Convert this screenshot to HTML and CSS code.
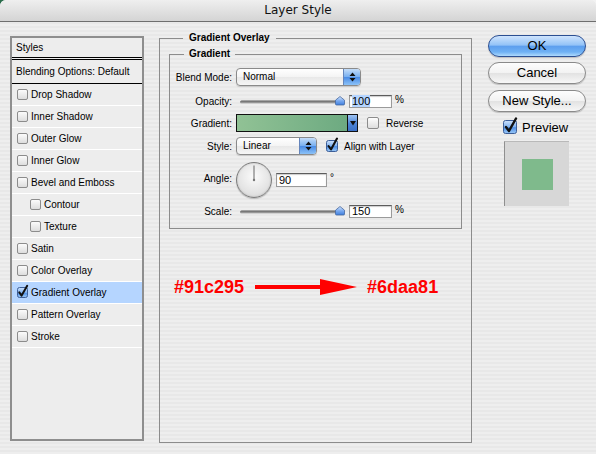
FILE: index.html
```html
<!DOCTYPE html>
<html>
<head>
<meta charset="utf-8">
<title>Layer Style</title>
<link rel="stylesheet" href="styles.css">
</head>
<body>
<svg class="defs" width="0" height="0">
  <defs>
    <linearGradient id="blueBox" x1="0" y1="0" x2="0" y2="1">
      <stop offset="0" stop-color="#cfe2fb"/>
      <stop offset="0.5" stop-color="#7fb2f1"/>
      <stop offset="0.55" stop-color="#4f8fe6"/>
      <stop offset="1" stop-color="#9ccaf8"/>
    </linearGradient>
    <linearGradient id="thumbG" x1="0" y1="0" x2="0" y2="1">
      <stop offset="0" stop-color="#d8e8fc"/>
      <stop offset="0.5" stop-color="#7aaaf0"/>
      <stop offset="1" stop-color="#3e7edd"/>
    </linearGradient>
    <linearGradient id="trackG" x1="0" y1="0" x2="0" y2="1">
      <stop offset="0" stop-color="#5a5a5a"/>
      <stop offset="1" stop-color="#b4b4b4"/>
    </linearGradient>
  </defs>
</svg>
<div class="window">
  <div class="titlebar">Layer Style</div>
  <div class="content">
    <div class="styles-panel">
      <div class="row head">Styles</div>
      <div class="row blend">Blending Options: Default</div>
      <div class="row item"><span class="cb"></span>Drop Shadow</div>
      <div class="row item"><span class="cb"></span>Inner Shadow</div>
      <div class="row item"><span class="cb"></span>Outer Glow</div>
      <div class="row item"><span class="cb"></span>Inner Glow</div>
      <div class="row item"><span class="cb"></span>Bevel and Emboss</div>
      <div class="row item sub"><span class="cb"></span>Contour</div>
      <div class="row item sub"><span class="cb"></span>Texture</div>
      <div class="row item"><span class="cb"></span>Satin</div>
      <div class="row item"><span class="cb"></span>Color Overlay</div>
      <div class="row item selected"><svg class="cbs" width="11" height="11" viewBox="0 0 11 11"><rect x="0.5" y="0.5" width="10" height="10" rx="2" fill="url(#blueBox)" stroke="#3d5f99"/><path d="M2.3 5.4 L4.6 8.6 L10.2 -1.2" fill="none" stroke="#111" stroke-width="2" stroke-linecap="round" stroke-linejoin="round"/></svg>Gradient Overlay</div>
      <div class="row item"><span class="cb"></span>Pattern Overlay</div>
      <div class="row item"><span class="cb"></span>Stroke</div>
    </div>

    <fieldset class="group outer">
      <legend>Gradient Overlay</legend>
      <fieldset class="group inner">
        <legend>Gradient</legend>
        <div class="frow r1">
          <span class="lbl">Blend Mode:</span>
          <div class="popup pop-blend"><span class="ptext">Normal</span><span class="parrow"><svg width="7" height="10" viewBox="0 0 7 10"><path d="M0.5 4 L3.5 0.5 L6.5 4 Z M0.5 6 L3.5 9.5 L6.5 6 Z" fill="#111"/></svg></span></div>
        </div>
        <div class="frow r2">
          <span class="lbl">Opacity:</span>
          <svg class="slider" width="109" height="18" viewBox="0 0 109 18"><rect x="4" y="8.5" width="103" height="3" rx="1.5" fill="url(#trackG)"/><path d="M104 4.5 L108.5 8.2 L108.5 12 Q108.5 13 107.5 13 L100.5 13 Q99.5 13 99.5 12 L99.5 8.2 Z" fill="url(#thumbG)" stroke="#45679f" stroke-width="0.8"/></svg>
          <span class="field"><span class="sel">100</span></span>
          <span class="unit">%</span>
        </div>
        <div class="frow r3">
          <span class="lbl">Gradient:</span>
          <span class="grad"></span><span class="garrow"><svg width="6" height="5" viewBox="0 0 6 5"><path d="M0 0 L6 0 L3 4.5 Z" fill="#111"/></svg></span>
          <span class="cbm rev"></span><span class="cbtext rev-t">Reverse</span>
        </div>
        <div class="frow r4">
          <span class="lbl">Style:</span>
          <div class="popup pop-style"><span class="ptext">Linear</span><span class="parrow"><svg width="7" height="10" viewBox="0 0 7 10"><path d="M0.5 4 L3.5 0.5 L6.5 4 Z M0.5 6 L3.5 9.5 L6.5 6 Z" fill="#111"/></svg></span></div>
          <svg class="cbm-s" width="12" height="12" viewBox="0 0 12 12"><rect x="0.5" y="0.5" width="11" height="11" rx="2" fill="url(#blueBox)" stroke="#3d5f99"/><path d="M2.5 6 L5 9.4 L11 -1.4" fill="none" stroke="#111" stroke-width="2.1" stroke-linecap="round" stroke-linejoin="round"/></svg>
          <span class="cbtext">Align with Layer</span>
        </div>
        <div class="frow r5">
          <span class="lbl lbl-angle">Angle:</span>
          <span class="dial"><svg width="34" height="34" viewBox="0 0 34 34"><line x1="17" y1="2.5" x2="17" y2="17" stroke="#666" stroke-width="1"/><circle cx="17" cy="17" r="1.2" fill="#777"/></svg></span>
          <span class="field angle">90</span>
          <span class="deg">°</span>
        </div>
        <div class="frow r6">
          <span class="lbl">Scale:</span>
          <svg class="slider" width="109" height="18" viewBox="0 0 109 18"><rect x="4" y="8.5" width="103" height="3" rx="1.5" fill="url(#trackG)"/><path d="M104 4.5 L108.5 8.2 L108.5 12 Q108.5 13 107.5 13 L100.5 13 Q99.5 13 99.5 12 L99.5 8.2 Z" fill="url(#thumbG)" stroke="#45679f" stroke-width="0.8"/></svg>
          <span class="field">150</span>
          <span class="unit">%</span>
        </div>
      </fieldset>
      <div class="note">
        <span>#91c295</span>
        <svg class="arrow" width="102" height="16" viewBox="0 0 102 16"><rect x="0" y="6" width="67" height="4" fill="#f00"/><path d="M65 0 L102 8 L65 16 Z" fill="#f00"/></svg>
        <span>#6daa81</span>
      </div>
    </fieldset>

    <div class="side">
      <div class="btn default">OK</div>
      <div class="btn b2">Cancel</div>
      <div class="btn b3">New Style...</div>
      <div class="preview">
        <svg class="pcb" width="14" height="14" viewBox="0 0 14 14"><rect x="0.5" y="0.5" width="13" height="13" rx="2" fill="url(#blueBox)" stroke="#3d5f99"/><path d="M3 7 L6 11 L13 -1.5" fill="none" stroke="#111" stroke-width="2.4" stroke-linecap="round" stroke-linejoin="round"/></svg>
        <span>Preview</span>
      </div>
      <div class="swatch"><span class="swatch-in"></span></div>
    </div>
  </div>
</div>
</body>
</html>
```

FILE: styles.css
```css
* { box-sizing: border-box; }

html {
  background: linear-gradient(90deg, #2a6c4b 0 8px, #f2f2f2 8px);
}

body {
  margin: 0;
  width: 596px;
  height: 454px;
  overflow: hidden;
  font-family: "Liberation Sans", Arial, sans-serif;
  font-size: 10px;
  color: #000;
}

.defs { position: absolute; width: 0; height: 0; }

.window {
  width: 596px;
  height: 454px;
  border-radius: 6px 6px 0 0;
  overflow: hidden;
  background: repeating-linear-gradient(to bottom, #eeeeee 0, #eeeeee 2px, #e8e8e8 2px, #e8e8e8 4px);
}

.titlebar {
  height: 22px;
  background: linear-gradient(#efefef, #d4d4d4);
  border-bottom: 1px solid #6e6e6e;
  text-align: center;
  font-family: "DejaVu Sans", sans-serif;
  font-size: 12px;
  line-height: 21px;
  color: #111;
}

.content {
  display: flex;
  align-items: flex-start;
  padding-left: 10px;
}

/* Left styles list */
.styles-panel {
  width: 134px;
  height: 405px;
  margin-top: 14px;
  border: 2px solid #8e8e8e;
  background: #ededed;
  flex: none;
}

.row {
  display: flex;
  align-items: center;
  white-space: nowrap;
}

.head {
  height: 22px;
  padding-left: 4px;
  border-bottom: 3px double #000;
}

.blend {
  height: 24px;
  padding-left: 4px;
  border-bottom: 1px solid #000;
}

.item {
  height: 22px;
  padding-left: 5px;
  border-bottom: 1px solid #ffffff;
}

.item.sub { padding-left: 18px; }

.item.selected { background: #b5d5ff; }

.cb {
  width: 11px;
  height: 11px;
  margin-right: 3px;
  border: 1px solid #8c8c8c;
  border-radius: 2px;
  background: linear-gradient(#fbfbfb, #dddddd);
  flex: none;
}

.cbs {
  display: block;
  overflow: visible;
  margin-right: 3px;
  flex: none;
}

/* Center fieldsets */
.group {
  margin: 0;
  min-width: 0;
  border: 1px solid #8c8c8c;
}

.group legend {
  font-weight: bold;
  font-size: 10px;
  line-height: 12px;
  margin-left: 14px;
  padding: 0 6px;
}

.outer {
  width: 313px;
  height: 411px;
  margin: 10px 0 0 15px;
  padding: 0 9px;
  flex: none;
}

.inner {
  margin-top: 4px;
  padding: 0 0 8px;
}

.inner legend { padding: 0 5px; }

.frow {
  display: flex;
  align-items: center;
  height: 18px;
  white-space: nowrap;
}

.r1 { margin-top: 8px; }
.r2 { margin-top: 6px; }
.r3 { margin-top: 4px; }
.r4 { margin-top: 5px; }
.r5 { margin-top: 7px; height: 36px; }
.r6 { margin-top: 4px; }

.lbl {
  width: 62px;
  margin-right: 4px;
  text-align: right;
  flex: none;
}

.lbl-angle { margin-top: -4px; }

.popup {
  display: flex;
  height: 18px;
  border: 1px solid #8a8a8a;
  border-radius: 4px;
  overflow: hidden;
  background: linear-gradient(#ffffff, #f4f4f4 50%, #e8e8e8 51%, #f6f6f6);
  box-shadow: 0 1px 1px rgba(0, 0, 0, 0.15);
  flex: none;
}

.pop-blend { width: 125px; }
.pop-style { width: 81px; }

.ptext {
  flex: 1;
  padding-left: 6px;
  line-height: 16px;
}

.parrow {
  width: 17px;
  display: flex;
  align-items: center;
  justify-content: center;
  border-left: 1px solid #6585bb;
  background: linear-gradient(#c4ddf9, #79b0f0 48%, #4a8ce6 52%, #8cc2f7);
}

.slider {
  display: block;
  flex: none;
}

.field {
  width: 43px;
  height: 13px;
  margin-left: 4px;
  padding-left: 2px;
  border: 1px solid #9a9a9a;
  border-top-color: #5c5c5c;
  background: #ffffff;
  font-size: 11px;
  line-height: 11px;
  box-shadow: inset 0 1px 1px rgba(0, 0, 0, 0.2);
  flex: none;
}

.field.angle {
  width: 51px;
  height: 14px;
  line-height: 12px;
}

.sel { background: #b5d5ff; }

.unit {
  margin-left: 3px;
  font-size: 10px;
  align-self: flex-start;
  margin-top: 2px;
}

.grad {
  width: 112px;
  height: 18px;
  border: 1px solid #111;
  background: linear-gradient(90deg, #91c295, #6daa81);
  flex: none;
}

.garrow {
  width: 10px;
  height: 18px;
  display: flex;
  align-items: center;
  justify-content: center;
  border: 1px solid #111;
  border-left: 0;
  background: linear-gradient(#9ec3f2, #4b83d6 55%, #3a6fc4);
  flex: none;
}

.cbm {
  width: 12px;
  height: 12px;
  border: 1px solid #8c8c8c;
  border-radius: 2px;
  background: linear-gradient(#fdfdfd, #dedede);
  flex: none;
}

.rev { margin-left: 9px; }

.cbtext { margin-left: 6px; }
.rev-t { margin-left: 7px; }

.cbm-s {
  display: block;
  overflow: visible;
  margin-left: 9px;
  flex: none;
}

.dial {
  width: 36px;
  height: 36px;
  border-radius: 50%;
  border: 1px solid #7b7b7b;
  background: radial-gradient(circle at 50% 40%, #fbfbfb, #e2e2e2 65%, #c9c9c9);
  box-shadow: 0 1px 1px rgba(0, 0, 0, 0.2), inset 0 0 2px rgba(0, 0, 0, 0.2);
  flex: none;
}

.dial svg { display: block; }

.deg {
  align-self: flex-start;
  margin-top: 10px;
  margin-left: 3px;
  font-size: 10px;
}

.note {
  display: flex;
  align-items: center;
  height: 20px;
  margin: 48px 0 0 5px;
  color: #ff0000;
  font-weight: bold;
  font-size: 18px;
  line-height: 20px;
  white-space: nowrap;
}

.arrow {
  display: block;
  margin: 0 10px 0 11px;
  flex: none;
}

/* Right column */
.side {
  width: 98px;
  margin: 13px 0 0 16px;
  display: flex;
  flex-direction: column;
  flex: none;
}

.btn {
  height: 22px;
  border: 1px solid #8a8a8a;
  border-radius: 11px;
  text-align: center;
  font-size: 13px;
  line-height: 20px;
  background: linear-gradient(#fdfdfd, #f2f2f2 50%, #e2e2e2 51%, #f7f7f7);
  box-shadow: 0 1px 1px rgba(0, 0, 0, 0.2);
}

.btn.default {
  border-color: #2c4f92;
  background: linear-gradient(#cfe4fd, #93c3f7 45%, #5d9fee 52%, #6fb1f4 80%, #aedafd);
}

.b2 { margin-top: 5px; }
.b3 { margin-top: 6px; }

.preview {
  display: flex;
  align-items: center;
  height: 16px;
  margin: 7px 0 0 15px;
  font-size: 13px;
}

.pcb {
  display: block;
  overflow: visible;
  margin-right: 5px;
  flex: none;
}

.swatch {
  width: 65px;
  height: 65px;
  margin: 6px 0 0 16px;
  border-left: 1px solid #8f8f8f;
  border-top: 1px solid #b9b9b9;
  background: #d7d7d7;
  display: flex;
  align-items: center;
  justify-content: center;
}

.swatch-in {
  width: 31px;
  height: 31px;
  background: #7fba8c;
}
```
